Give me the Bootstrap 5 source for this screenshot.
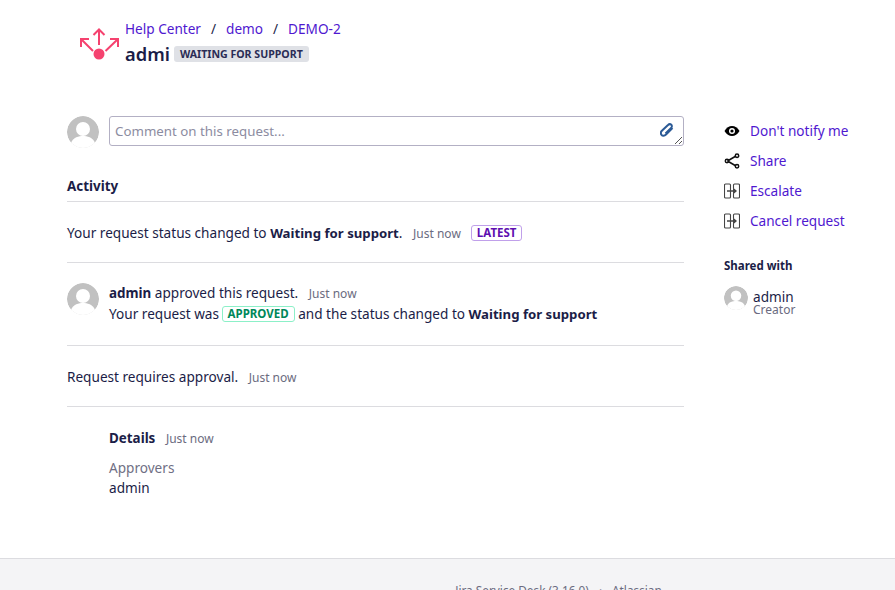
<!DOCTYPE html>
<html lang="en"><head><meta charset="utf-8"><title>DEMO-2</title>
<link href="https://cdn.jsdelivr.net/npm/bootstrap@5.3.0/dist/css/bootstrap.min.css" rel="stylesheet">
<style>
html,body{height:590px;overflow:hidden}
body{font-family:"Noto Sans","Liberation Sans",sans-serif;font-size:13.6px;line-height:20px;color:#1b1d47;background:#fff}
a{color:#4f18d0;text-decoration:none}
b{font-size:13.4px}
b.bw{font-size:13.2px}
.pg{padding-left:67px;height:558px}
.hdr{padding:18px 0 0 13px;height:116px}
.hcol{margin-left:6px}
.crumbs{height:22px;line-height:22px}
.crumbs .sep{margin:0 10px;color:#1b1d47}
.ttl{font-size:18.300px;line-height:28px;font-weight:600}
.st{background:#dfe1e6;color:#2a2c55;font-size:10.600px;font-weight:700;line-height:16px;height:16px;padding:0 6px;border-radius:3px;margin-left:4px;text-transform:uppercase}
.mainc{width:617px}
.side{margin-left:40px;width:131px}
.ava{border-radius:50%;display:block;flex:none}
.cbox{height:30px;border:1px solid #b3b0c4;border-radius:3px;margin-left:10px;padding:0 5px;color:#8c8ca1;line-height:28px;position:relative;font-size:13.300px}
.clip{position:absolute;right:9px;top:6px}
.grip{position:absolute;right:0;bottom:0}
.acth{margin-top:28px;font-weight:700;height:26px;line-height:20px;border-bottom:1px solid #dcdce0;font-size:13.400px}
.ev{border-bottom:1px solid #dcdce0;padding:21px 0 19px}
.evb{padding:20px 0 21px}
.evt{margin-left:10px}
.ln2{margin-top:1px}
.when{color:#6b6b80;font-size:12px;margin-left:7px;line-height:1}
.loz{display:inline-block;font-size:11.500px;font-weight:700;line-height:14px;padding:0 5px;border-radius:3px;border:1px solid;vertical-align:1px}
.lp{color:#5e0fb0;border-color:#c0a0ea;margin-left:10px}
.lg{color:#00875a;border-color:#8cf0c8;margin-left:-1px}
.det{padding:21px 0 0 42px}
.lab{color:#6f6f84;margin-top:10px}
.sa{height:30px;display:flex;align-items:center}
.sa svg{width:16px;flex:none;margin-right:10px}
.shh{font-size:11.500px;font-weight:700;margin-top:21px;line-height:18px}
.whorow{margin-top:11px}
.who{line-height:14px;margin-left:5px;padding-top:4px}
.who small{display:block;font-size:12px;line-height:12px;color:#6b6b80}
.foot{height:60px;background:#f4f4f6;border-top:1px solid #dcdce0;text-align:center;color:#6b6b80;font-size:11.800px;padding:21px 0 0 222px}
.foot a{color:#6b6b80}
.dotsep{margin:0 10px}
</style></head>
<body>
<div class="pg">
<div class="hdr d-flex">
<svg width="39" height="44" viewBox="0 0 39 44"><g fill="none" stroke="#f5426f" stroke-width="2"><path d="M19 27V11.500M13.500 17L19 11.500 24.500 17M13 33L1 21M1 29V21H9M25.500 33L38 21M30 21H38V29"/></g><circle cx="19" cy="36" r="5.500" fill="#f5426f"/></svg>
<div class="hcol"><div class="crumbs"><a href="#">Help Center</a><span class="sep">/</span><a href="#">demo</a><span class="sep">/</span><a href="#">DEMO-2</a></div>
<div class="d-flex align-items-center"><span class="ttl">admi</span><span class="st">Waiting for support</span></div></div>
</div>
<div class="d-flex">
<div class="mainc">
<div class="d-flex">
<svg class="ava" width="32" height="32" viewBox="0 0 32 32"><circle cx="16" cy="16" r="16" fill="#c1c1c1"/><circle cx="16" cy="13" r="7" fill="#fff"/><path d="M4 27c2-6 8-7 12-7s10 1 12 7a16 16 0 0 1-24 0z" fill="#fff"/></svg>
<div class="cbox flex-grow-1">Comment on this request...
<svg class="clip" width="14" height="15" viewBox="0 0 14 15"><path d="M12.500 5L6 11.500c-1.500 1.500-3.500 1.500-4.500.3s-.8-2.800.4-4L8 2c1-1 2.500-1 3.300-.2s.8 2.200-.2 3.200L5.500 10.500" fill="none" stroke="#2b5a96" stroke-width="2"/></svg>
<svg class="grip" width="10" height="10" viewBox="0 0 10 10"><path d="M9 2L2 9M9 6L6 9" stroke="#555" fill="none"/></svg></div>
</div>
<div class="acth">Activity</div>
<div class="ev">Your request status changed to <b class="bw">Waiting for support</b>. <span class="when">Just now</span><span class="loz lp">LATEST</span></div>
<div class="ev evb d-flex">
<svg class="ava" width="32" height="32" viewBox="0 0 32 32"><circle cx="16" cy="16" r="16" fill="#c1c1c1"/><circle cx="16" cy="13" r="7" fill="#fff"/><path d="M4 27c2-6 8-7 12-7s10 1 12 7a16 16 0 0 1-24 0z" fill="#fff"/></svg>
<div class="evt"><div><b>admin</b> approved this request. <span class="when">Just now</span></div><div class="ln2">Your request was <span class="loz lg">APPROVED</span> and the status changed to <b class="bw">Waiting for support</b></div></div>
</div>
<div class="ev">Request requires approval. <span class="when">Just now</span></div>
<div class="det"><div><b>Details</b> <span class="when">Just now</span></div><div class="lab">Approvers</div><div>admin</div></div>
</div>
<div class="side">
<div class="sa"><svg height="16" viewBox="0 0 16 16"><path d="M.500 8C2.500 4.800 5 3 8 3s5.500 1.800 7.500 5c-2 3.200-4.500 5-7.500 5S2.500 11.200.500 8z" fill="#000"/><circle cx="8" cy="8" r="3" fill="#fff"/><circle cx="8" cy="8" r="1.600" fill="#000"/></svg><a href="#">Don't notify me</a></div>
<div class="sa"><svg height="16" viewBox="0 0 16 16"><g fill="none" stroke="#111" stroke-width="1.500"><path d="M3.500 8L12 3M3.500 8l8.500 5"/><circle cx="3" cy="8" r="1.700"/><circle cx="13" cy="2.700" r="1.700"/><circle cx="13" cy="13.300" r="1.700"/></g></svg><a href="#">Share</a></div>
<div class="sa"><svg height="16" viewBox="0 0 16 16"><g fill="none" stroke="#444" stroke-width="1.100"><rect x=".500" y="1" width="6" height="14" rx="1"/><path d="M9.500 5.500V2a1 1 0 0 1 1-1h4a1 1 0 0 1 1 1v12a1 1 0 0 1-1 1h-4a1 1 0 0 1-1-1v-3.500"/></g><path d="M3 7.200h6V4.500L13 8l-4 3.500V8.800H3z" fill="#444"/></svg><a href="#">Escalate</a></div>
<div class="sa"><svg height="16" viewBox="0 0 16 16"><g fill="none" stroke="#444" stroke-width="1.100"><rect x=".500" y="1" width="6" height="14" rx="1"/><path d="M9.500 5.500V2a1 1 0 0 1 1-1h4a1 1 0 0 1 1 1v12a1 1 0 0 1-1 1h-4a1 1 0 0 1-1-1v-3.500"/></g><path d="M3 7.200h6V4.500L13 8l-4 3.500V8.800H3z" fill="#444"/></svg><a href="#">Cancel request</a></div>
<div class="shh">Shared with</div>
<div class="d-flex whorow"><svg class="ava" width="24" height="24" viewBox="0 0 32 32"><circle cx="16" cy="16" r="16" fill="#c1c1c1"/><circle cx="16" cy="13" r="7" fill="#fff"/><path d="M4 27c2-6 8-7 12-7s10 1 12 7a16 16 0 0 1-24 0z" fill="#fff"/></svg><div class="who">admin<small>Creator</small></div></div>
</div>
</div>
</div>
<div class="foot"><a href="#">Jira Service Desk (3.16.0)</a><span class="dotsep">·</span><a href="#">Atlassian</a></div>
</body></html>
